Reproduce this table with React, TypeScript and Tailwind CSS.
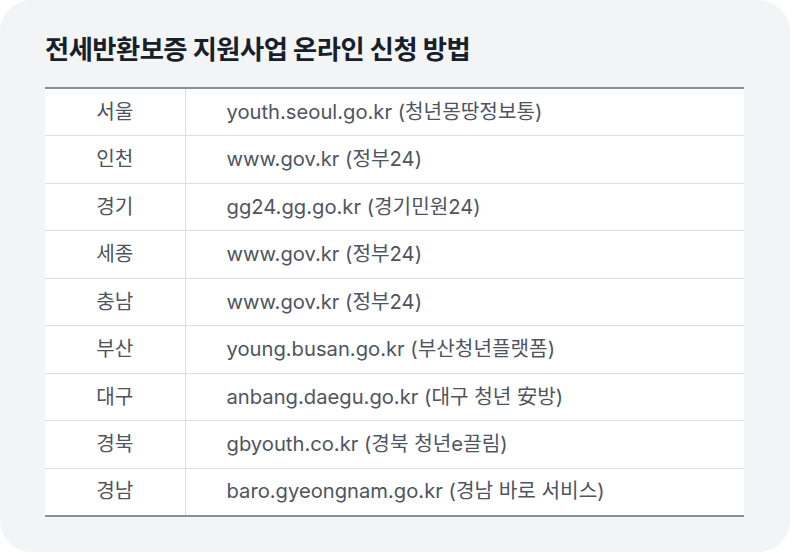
const rows: [string, string][] = [
  ["서울", "youth.seoul.go.kr (청년몽땅정보통)"],
  ["인천", "www.gov.kr (정부24)"],
  ["경기", "gg24.gg.go.kr (경기민원24)"],
  ["세종", "www.gov.kr (정부24)"],
  ["충남", "www.gov.kr (정부24)"],
  ["부산", "young.busan.go.kr (부산청년플랫폼)"],
  ["대구", "anbang.daegu.go.kr (대구 청년 安방)"],
  ["경북", "gbyouth.co.kr (경북 청년e끌림)"],
  ["경남", "baro.gyeongnam.go.kr (경남 바로 서비스)"],
];

export default function App() {
  return (
    <div className="h-[552px] w-[790px] bg-white font-['Inter','Noto_Sans_CJK_KR',sans-serif]">
      <div className="h-full w-full rounded-[32px] bg-[#f2f4f6] px-[45px] pt-[34px]">
        <h1 className="text-[26.3px] font-bold leading-[32px] tracking-[-0.02em] text-[#191f28]">
          전세반환보증 지원사업 온라인 신청 방법
        </h1>
        <table className="mt-[21px] w-[699px] border-collapse border-y-2 border-[#8b8f96] bg-white text-[20.2px] text-[#4e5561]">
          <tbody>
            {rows.map(([region, site]) => (
              <tr key={region} className="h-[47.5px] border-b border-[#dcdee2] last:border-b-0">
                <td className="w-[140px] border-r border-[#dcdee2] text-center">{region}</td>
                <td className="pl-[41px]">{site}</td>
              </tr>
            ))}
          </tbody>
        </table>
      </div>
    </div>
  );
}
